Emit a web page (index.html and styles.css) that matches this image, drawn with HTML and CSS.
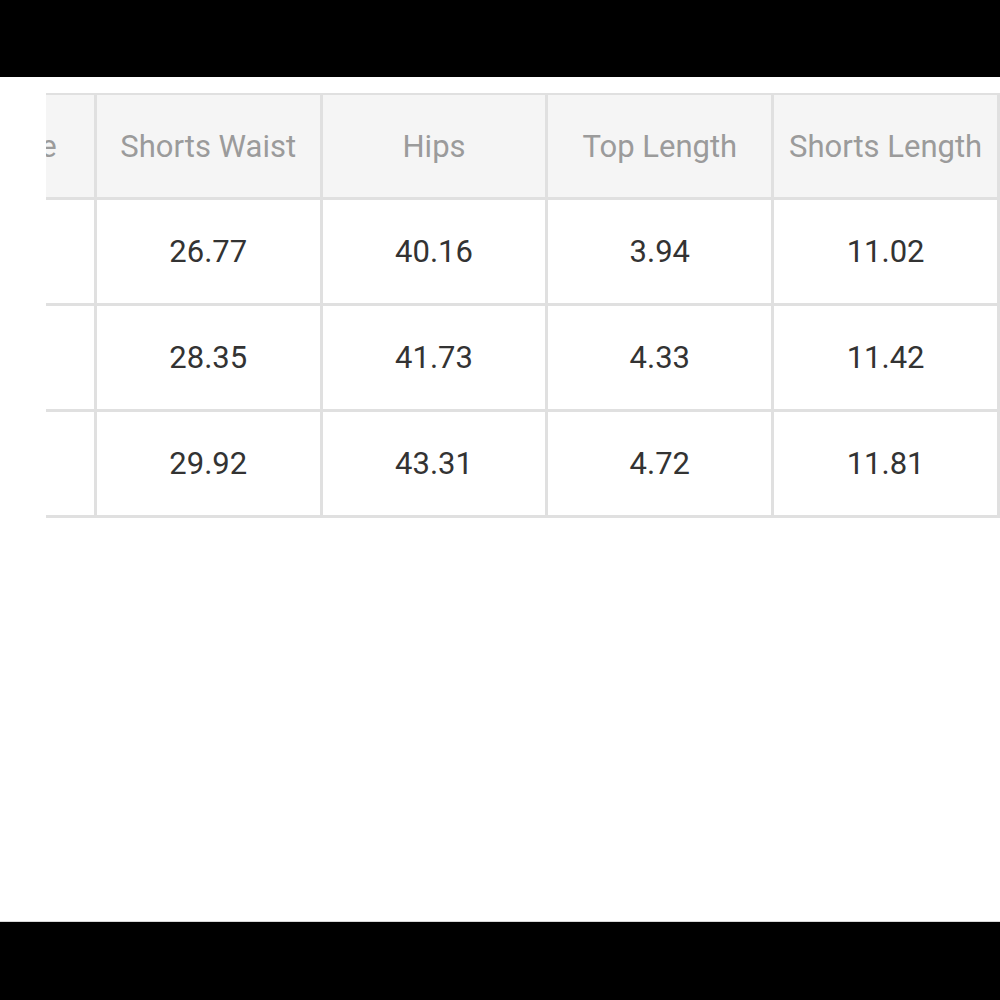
FILE: index.html
```html
<!DOCTYPE html>
<html>
<head>
<meta charset="utf-8">
<link rel="stylesheet" href="styles.css">
</head>
<body>
<div class="bar bar-top"></div>
<main class="content">
  <div class="table-wrap">
    <table class="size-table">
      <thead>
        <tr>
          <th class="col-first">Size</th>
          <th>Shorts Waist</th>
          <th>Hips</th>
          <th>Top Length</th>
          <th>Shorts Length</th>
        </tr>
      </thead>
      <tbody>
        <tr><td class="col-first"></td><td>26.77</td><td>40.16</td><td>3.94</td><td>11.02</td></tr>
        <tr><td class="col-first"></td><td>28.35</td><td>41.73</td><td>4.33</td><td>11.42</td></tr>
        <tr><td class="col-first"></td><td>29.92</td><td>43.31</td><td>4.72</td><td>11.81</td></tr>
      </tbody>
    </table>
  </div>
</main>
<div class="bar bar-bottom"></div>
</body>
</html>
```
FILE: styles.css
```css
html, body {
  margin: 0;
  padding: 0;
  background: #ffffff;
  font-family: Roboto, "Noto Sans", sans-serif;
}
.bar {
  background: #000000;
}
.bar-top {
  height: 77px;
}
.bar-bottom {
  height: 78px;
}
.content {
  height: 845px;
  padding-top: 16px;
  box-sizing: border-box;
  border-bottom: 1px solid #d8d8d8;
}
.table-wrap {
  margin-left: 46px;
  width: 954px;
  overflow: hidden;
}
.size-table {
  margin-left: -84px;
  border-collapse: separate;
  border-spacing: 0;
  table-layout: fixed;
  border-top: 2px solid #e0e0e0;
}
.size-table th,
.size-table td {
  padding: 0;
  box-sizing: border-box;
  text-align: center;
  vertical-align: middle;
  font-size: 31px;
  font-weight: 400;
  border-right: 3px solid #e0e0e0;
  border-bottom: 3px solid #e0e0e0;
}
.size-table th {
  background: #f5f5f5;
  color: #9b9b9b;
  height: 105px;
}
.size-table td {
  color: #333333;
  height: 106px;
}
.size-table .col-first {
  width: 135px;
  color: #9b9b9b;
}
.size-table th:not(.col-first),
.size-table td:not(.col-first) {
  width: 226px;
}
```
